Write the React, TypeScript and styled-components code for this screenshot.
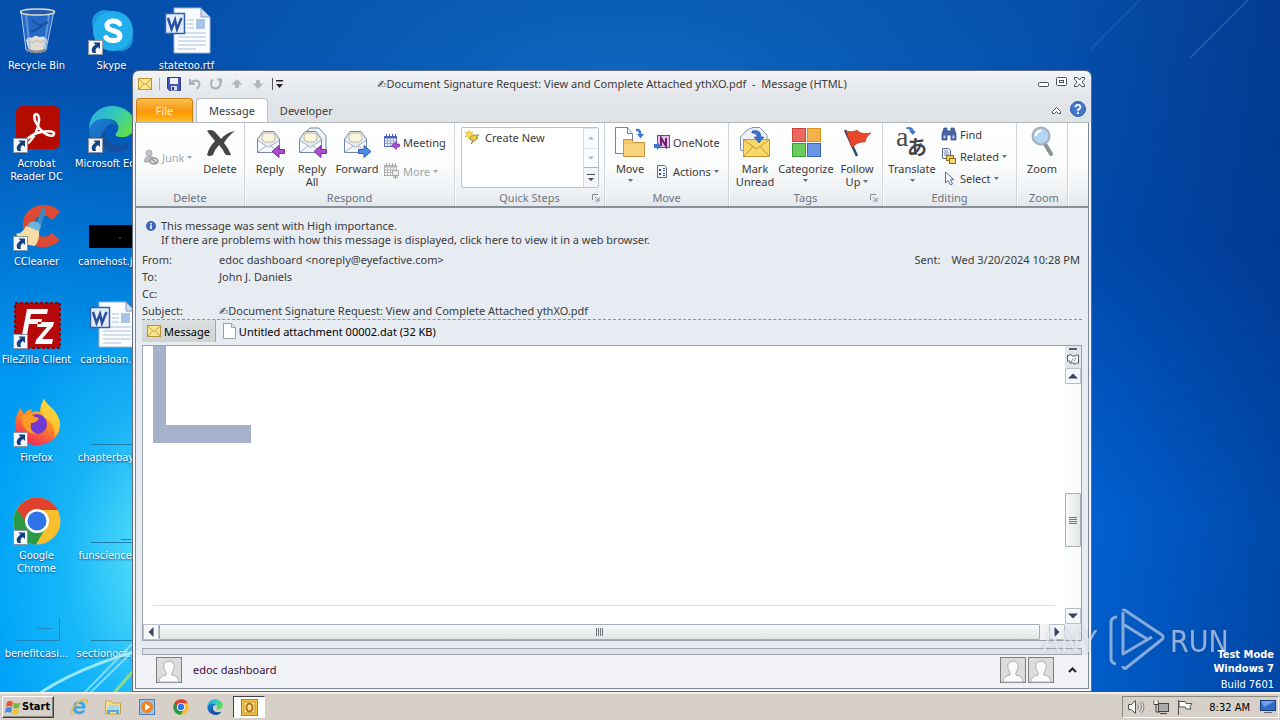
import React from "react";
import styled, { createGlobalStyle, css } from "styled-components";

const ui = '"Noto Sans", "DejaVu Sans", sans-serif';
const shell = '"DejaVu Sans Condensed", "DejaVu Sans", sans-serif';

const GlobalStyle = createGlobalStyle`
  * { box-sizing: border-box; }
  body { margin: 0; font: 11px/13px ${ui}; color: #3b3b3b; overflow: hidden; }
  button { font: inherit; color: inherit; background: none; border: 0; padding: 0; margin: 0; cursor: default; }
`;

/* ---------- desktop ---------- */

const Screen = styled.div`
  height: 100vh;
  display: grid;
  grid-template-rows: 1fr 28px;
`;

const Desktop = styled.main`
  position: relative;
  overflow: hidden;
  background:
    radial-gradient(ellipse 170px 280px at 160px 560px, rgba(110, 240, 250, 0.85), rgba(60, 210, 250, 0.4) 55%, transparent 100%),
    radial-gradient(ellipse 500px 540px at 60px 620px, #00a8fa 0%, rgba(0, 160, 246, 0.9) 45%, transparent 100%),
    radial-gradient(ellipse 460px 200px at 620px 90px, rgba(20, 120, 204, 0.6), transparent 100%),
    linear-gradient(to right, transparent 82%, rgba(0, 36, 110, 0.45) 100%),
    linear-gradient(to bottom, #0650ac 0%, #004cb0 35%, #0066da 75%, #0062d2 100%);
`;

const Wallpaper = styled.svg`
  position: absolute;
  left: 0;
  bottom: 0;
`;

const Streak = styled.svg`
  position: absolute;
  right: 0;
  top: 0;
`;

const IconGrid = styled.div`
  display: grid;
  grid-auto-flow: column;
  grid-template-rows: repeat(7, 98px);
  grid-auto-columns: 75px;
  width: max-content;
  padding-top: 7px;
  margin-left: -1px;
`;

const Shortcut = styled.button`
  display: flex;
  flex-direction: column;
  align-items: center;
  justify-content: flex-start;
  gap: 4px;
  color: #fff;
  font-family: ${shell};
  text-shadow: 0 1px 2px rgba(0, 30, 90, 0.8);
`;

const ShortcutLabel = styled.span<{ $wrap?: boolean }>`
  width: 75px;
  display: flex;
  justify-content: center;
  text-align: center;
  white-space: ${(p) => (p.$wrap ? "normal" : "nowrap")};
`;

const BuildInfo = styled.div`
  position: absolute;
  right: 6px;
  bottom: 0;
  display: flex;
  flex-direction: column;
  align-items: flex-end;
  color: #fff;
  font: bold 11px/14px ${shell};
`;
const BuildNumber = styled.span`
  margin-top: 2px;
  font-weight: normal;
`;

const Watermark = styled.svg`
  position: absolute;
  right: 44px;
  bottom: 18px;
  pointer-events: none;
  filter: drop-shadow(0 0 2px rgba(40, 60, 90, 0.35));
`;

/* ---------- window ---------- */

const Window = styled.section`
  position: absolute;
  left: 132px;
  right: 188px;
  top: 70px;
  bottom: 0;
  display: flex;
  flex-direction: column;
  padding: 0 2px 2px;
  border: 1px solid #5d6a7c;
  border-radius: 7px 7px 0 0;
  background: linear-gradient(to bottom, #f2f4f6 0, #e2e5e9 28px, #dfe3e6 51px, #f4f6f8 52px);
`;

const TitleBar = styled.header`
  height: 26px;
  display: flex;
  align-items: center;
  padding: 0 3px;
`;

const QuickAccess = styled.div`
  display: flex;
  align-items: center;
  gap: 7px;
  flex: 1 1 0;
`;
const Rule = styled.i<{ $dark?: boolean }>`
  width: 1px;
  height: 12px;
  background: ${(p) => (p.$dark ? "#555" : "#a8adb5")};
`;
const Title = styled.h1`
  margin: 0;
  font: 11px/14px ${ui};
  white-space: pre;
`;
const WindowButtons = styled.div`
  flex: 1 1 0;
  display: flex;
  justify-content: flex-end;
  align-items: center;
  gap: 5px;
  padding-bottom: 2px;
`;

const TabStrip = styled.nav`
  height: 25px;
  display: flex;
  align-items: flex-end;
  padding: 0 3px 0 1px;
`;
const Tab = styled.button<{ $kind?: "file" | "active" }>`
  height: 24px;
  padding: 0 12px;
  margin-left: ${(p) => (p.$kind === "active" ? "3px" : "0")};
  border-radius: 4px 4px 0 0;
  ${(p) =>
    p.$kind === "file" &&
    css`
      width: 57px;
      color: #fff6dc;
      border: 1px solid #c87d10;
      border-bottom: 0;
      background: linear-gradient(to bottom, #fbc04c, #f79a1a 45%, #ff9a00 60%, #ffc02c);
    `}
  ${(p) =>
    p.$kind === "active" &&
    css`
      background: #fff;
      border: 1px solid #bcc1c8;
      border-bottom: 0;
    `}
`;
const TabTools = styled.div`
  margin-left: auto;
  height: 25px;
  display: flex;
  align-items: center;
  gap: 9px;
`;

const Frame = styled.div`
  flex: 1;
  min-height: 0;
  display: flex;
  flex-direction: column;
  border: 1px solid #7c8797;
  border-top-color: #b4bac2;
  background: #e7ebf2;
`;

/* ---------- ribbon ---------- */

const Ribbon = styled.div`
  height: 85px;
  display: flex;
  border-bottom: 2px solid #8a9099;
  background: linear-gradient(to bottom, #fff 0%, #fbfcfc 50%, #eceff2 88%, #e3e6ea 100%);
`;
const Group = styled.section<{ $w: number }>`
  width: ${(p) => p.$w}px;
  display: grid;
  grid-template-rows: 1fr 15px;
  border-right: 1px solid #cfd4da;
  box-shadow: 1px 0 #fff;
`;
const GroupBody = styled.div<{ $pad?: number }>`
  display: flex;
  align-items: flex-start;
  padding-left: ${(p) => p.$pad ?? 4}px;
  padding-top: 3px;
`;
const GroupLabel = styled.div`
  display: grid;
  grid-template-columns: 12px 1fr 12px;
  align-items: start;
  text-align: center;
  color: #6c7482;
`;
const GroupName = styled.span`
  grid-column: 2;
`;
const Launcher = styled.button`
  grid-column: 3;
  height: 13px;
  display: flex;
  align-items: center;
`;
const Large = styled.button<{ $w: number }>`
  width: ${(p) => p.$w}px;
  display: flex;
  flex-direction: column;
  align-items: center;
  gap: 4px;
  white-space: nowrap;
`;
const LargeText = styled.span`
  display: flex;
  flex-direction: column;
  align-items: center;
`;
const WithArrow = styled.span`
  display: flex;
  align-items: center;
  gap: 3px;
`;
const ArrowRow = styled.span`
  height: 10px;
  display: flex;
  align-items: center;
`;
const Column = styled.div<{ $gap: number; $top: number }>`
  display: flex;
  flex-direction: column;
  gap: ${(p) => p.$gap}px;
  padding-top: ${(p) => p.$top}px;
  padding-left: 3px;
`;
const Small = styled.button<{ $off?: boolean }>`
  height: 16px;
  display: flex;
  align-items: center;
  gap: 3px;
  color: ${(p) => (p.$off ? "#a2a6ab" : "inherit")};
  white-space: nowrap;
`;
const JunkSlot = styled.div`
  width: 57px;
  padding-top: 23px;
`;
const Gallery = styled.div`
  width: 138px;
  height: 61px;
  display: grid;
  grid-template-columns: 1fr 15px;
  margin-top: 1px;
  border: 1px solid #bcc2ca;
  border-radius: 2px;
  background: #fff;
`;
const GalleryItem = styled.button`
  height: 18px;
  display: flex;
  align-items: center;
  gap: 4px;
  padding-left: 3px;
`;
const GalleryScroll = styled.div`
  display: grid;
  grid-template-rows: repeat(3, 1fr);
  border-left: 1px solid #d3d7dc;
`;
const GalleryButton = styled.button<{ $last?: boolean }>`
  display: flex;
  align-items: center;
  justify-content: center;
  background: ${(p) => (p.$last ? "#f3f5f7" : "#fafbfc")};
  border-top: 1px solid ${(p) => (p.$last ? "#aab1bb" : "#e4e7ea")};
`;

/* ---------- message header ---------- */

const Pane = styled.div`
  flex: 1;
  min-height: 0;
  display: flex;
  flex-direction: column;
  padding: 11px 6px 7px;
`;
const Info = styled.div`
  display: flex;
  gap: 5px;
  padding: 0 4px;
  line-height: 14px;
`;
const InfoIcon = styled.span`
  height: 14px;
  display: flex;
  align-items: center;
`;
const InfoText = styled.div`
  display: flex;
  flex-direction: column;
`;
const Fields = styled.dl`
  display: grid;
  grid-template-columns: 77px 1fr auto;
  grid-auto-rows: 17px;
  align-items: center;
  margin: 4px 0 0;
  padding-right: 2px;
  border-bottom: 1px dashed #8c929c;
`;
const Name = styled.dt`
  grid-column: 1;
`;
const Value = styled.dd`
  margin: 0;
`;
const Sent = styled.dd`
  margin: 0;
  display: flex;
  gap: 11px;
`;

const Attachments = styled.div`
  height: 25px;
  display: flex;
  align-items: flex-start;
  gap: 7px;
  color: #000;
`;
const AttachTab = styled.button<{ $on?: boolean }>`
  height: 22px;
  display: flex;
  align-items: center;
  gap: 3px;
  ${(p) =>
    p.$on &&
    css`
      padding: 0 5px;
      border-right: 1px solid #a0a6a6;
      background: linear-gradient(to bottom, #dcdfe0, #cfd4d1);
    `}
`;

/* ---------- reading area ---------- */

const Reader = styled.div`
  flex: 1;
  min-height: 0;
  display: grid;
  grid-template-columns: 1fr 16px;
  grid-template-rows: 1fr 16px;
  border: 1px solid #9aa1ac;
  background: #e9ecf0;
`;
const Page = styled.article`
  min-height: 0;
  display: flex;
  flex-direction: column;
  justify-content: space-between;
  padding: 0 10px 18px;
  background: #fff;
`;
const Corner = styled.div`
  width: 98px;
  height: 97px;
  border-left: 13px solid #a6b1cb;
  border-bottom: 18px solid #a6b1cb;
`;
const Divider = styled.hr`
  width: 100%;
  margin: 0;
  border: 0;
  border-top: 1px solid #dcdcdc;
`;
const VScroll = styled.div`
  min-height: 0;
  display: grid;
  grid-template-rows: 22px 16px 110fr 54px 61fr 16px;
  background: #fafbfb;
`;
const SplitBox = styled.div`
  display: flex;
  flex-direction: column;
  align-items: center;
  gap: 3px;
  padding-top: 2px;
  background: #e1e5ea;
`;
const Grip = styled.i`
  width: 8px;
  height: 2px;
  background: #555b68;
`;
const HScroll = styled.div`
  display: grid;
  grid-template-columns: 16px 1fr 9px 16px;
  background: #f2f3f4;
`;
const ScrollButton = styled.button`
  display: flex;
  align-items: center;
  justify-content: center;
  border: 1px solid #b9bfc7;
  border-radius: 1px;
  background: #f6f7f8;
`;
const Thumb = styled.div<{ $v?: boolean }>`
  display: flex;
  align-items: center;
  justify-content: center;
  border: 1px solid #a6acb4;
  border-radius: 1px;
  background: linear-gradient(${(p) => (p.$v ? "to right" : "to bottom")}, #f8f9f9, #e2e5e6);
`;
const Empty = styled.span``;

const Splitter = styled.div`
  height: 7px;
  margin: 0 6px;
  border: 1px solid #a0a7b1;
  background: #dfe3e9;
`;
const People = styled.footer`
  height: 33px;
  display: flex;
  align-items: flex-start;
  gap: 2px;
  padding: 2px 11px 0 20px;
  background: #f0f2f5;
`;
const PersonName = styled.span`
  flex: 1;
  padding-left: 9px;
  line-height: 26px;
  color: #3a0f3c;
`;
const Expand = styled.button`
  height: 26px;
  padding-left: 12px;
  display: flex;
  align-items: center;
`;

/* ---------- taskbar ---------- */

const Taskbar = styled.footer`
  display: flex;
  align-items: flex-start;
  padding: 2px 1px 0 2px;
  border-top: 2px solid #f4f1ec;
  background: #d6d0c8;
  color: #000;
  font-family: ${shell};
`;
const StartButton = styled.button`
  height: 22px;
  width: 52px;
  display: flex;
  align-items: center;
  gap: 1px;
  padding-left: 2px;
  font: bold 11px/14px ${shell};
  border: 1px solid;
  border-color: #fff #404040 #404040 #fff;
  box-shadow: inset -1px -1px #8c8780;
`;
const Pins = styled.div`
  flex: 1;
  display: flex;
  padding-left: 9px;
  gap: 2px;
`;
const Pin = styled.button<{ $on?: boolean }>`
  width: 32px;
  height: 22px;
  display: flex;
  align-items: center;
  justify-content: center;
  ${(p) =>
    p.$on &&
    css`
      background: #fff;
      border: 1px solid;
      border-color: #404040 #fff #fff #404040;
    `}
`;
const Tray = styled.div`
  height: 22px;
  display: flex;
  align-items: center;
  gap: 8px;
  padding: 0 2px 0 5px;
  border: 1px solid;
  border-color: #8c8780 #fff #fff #8c8780;
`;
const Clock = styled.time`
  padding: 0 2px 0 8px;
`;

/* ---------- drawings ---------- */

const Down = ({ c = "#6a6f78" }: { c?: string }) => (
  <svg width="5" height="3" viewBox="0 0 5 3"><path d="M0 0h5L2.500 3z" fill={c} /></svg>
);
const Tri = ({ d, c = "#3c4260" }: { d: string; c?: string }) => (
  <svg width="10" height="10" viewBox="0 0 10 10"><path d={d} fill={c} /></svg>
);

const LinkArrow = () => (
  <g transform="translate(0 33)">
    <rect x=".5" y=".5" width="14" height="14" fill="#f4f7fb" stroke="#8a94a4" />
    <path d="M5.500 2.500H12V9l-2-2c-2.500 1.500-3 3-2 6H5C2.500 10 4 6.500 7.500 4.700z" fill="#17417e" />
  </g>
);
const Art = ({ children, link }: { children: React.ReactNode; link?: boolean }) => (
  <svg width="48" height="48" viewBox="0 0 48 48">
    {children}
    {link && <LinkArrow />}
  </svg>
);

const RecycleBin = () => (
  <Art>
    <path d="M8 4l5 39q10 5 20 0l8-39z" fill="#2f72d0" fillOpacity=".75" stroke="#a9c8ee" />
    <path d="M13 33q2-4 6-2 3-4 7-1 6-2 8 3l-1.500 9q-9 4-17 0z" fill="#e2dcd4" />
    <path d="M16 34q4 3 8-1 4 4 7 0" stroke="#b8b4ae" fill="none" />
    <path d="M13 8l4 34M36 8l-5 34" stroke="#8cbcf0" strokeOpacity=".55" strokeWidth="2" />
    <path d="M19 13q8 9 16 2M17 25q9-2 16-10" stroke="#1b4fa4" strokeWidth="2" fill="none" />
    <ellipse cx="24.500" cy="5" rx="17" ry="3" fill="#245cb0" stroke="#dcd8cc" strokeWidth="1.500" />
    <path d="M14 43q9 4 19 0" stroke="#8b8a86" strokeWidth="2.500" fill="none" />
  </Art>
);
const Skype = () => (
  <Art link>
    <circle cx="17" cy="16" r="13" fill="#1b9ade" />
    <circle cx="33" cy="32" r="12" fill="#1a93dc" />
    <circle cx="25" cy="24" r="20" fill="#22aeea" />
    <path d="M31.500 17C29.500 13 19 12.500 19 18.500c0 6.500 13 4 13 10.500 0 6-11.500 5.500-14 1.500" stroke="#fff" strokeWidth="5" fill="none" strokeLinecap="round" />
  </Art>
);
const WordDoc = () => (
  <Art>
    <path d="M11 1h27l9 9v36H11z" fill="#fbfcfe" stroke="#9fb4d2" />
    <path d="M38 1v9h9z" fill="#cfdcf0" stroke="#7f9cc8" />
    <path d="M24 13h7M24 17h7M24 21h7M15 26h28M15 30h28M15 34h28M15 38h28M15 42h18" stroke="#a9bedd" />
    <rect x="33" y="12" width="9" height="10" fill="#a9c2e6" />
    <rect x="2.500" y="6.500" width="19" height="20" fill="#e4ecf8" stroke="#2f5fb0" strokeWidth="1.500" />
    <path d="M5 11l3.500 11 3.500-9 2 9 4.500-11" stroke="#2a50a4" strokeWidth="2.500" fill="none" />
  </Art>
);
const Acrobat = () => (
  <Art link>
    <rect x="3" y="1" width="44" height="43" rx="6" fill="#b30b00" />
    <path d="M23 9c-5 2 2 14 7 18s10 5 11 2c1-4-11-3-17-1-5 2-13 7-12 10 2 3 8-4 11-11s5-17 0-18z" fill="none" stroke="#fff" strokeWidth="2.500" />
  </Art>
);
const EdgeShape = () => (
  <>
    <defs>
      <linearGradient id="edgeA" x1="0" y1="0" x2="1" y2=".6"><stop offset="0" stopColor="#2aa6e4" /><stop offset=".5" stopColor="#31c8c0" /><stop offset="1" stopColor="#5ede4c" /></linearGradient>
      <linearGradient id="edgeB" x1="0" y1="0" x2="1" y2="1"><stop offset="0" stopColor="#1b83d8" /><stop offset="1" stopColor="#12499c" /></linearGradient>
    </defs>
    <path d="M1 25C1 10 11 1 24 1c14 0 24 10 23 20-1 8-8 12-15 11-5 0-5-3-3-5 4-5 0-13-9-13-9 0-17 5-19 11z" fill="url(#edgeA)" />
    <path d="M1 24C5 12 22 10 29 20c-9-4-14 4-11 12 3 9 14 12 25 6C35 52 10 49 4 36Q1 30 1 24z" fill="url(#edgeB)" />
    <path d="M18 24c-3 12 9 20 25 14-8 12-22 11-28 3-4-6-3-13 3-17z" fill="#164f9e" />
  </>
);
const CCleaner = () => (
  <Art link>
    <path d="M47 9C38-3 8-1 10 25c1 20 24 25 37 12l-8-7c-7 7-18 4-18-8 0-10 11-13 18-5z" fill="#dc4a32" />
    <path d="M29 5l4 1-5 18-5-2z" fill="#3c8ac4" />
    <path d="M16 20q8-4 12 3l-2 6-12-4z" fill="#6cb4dc" />
    <path d="M13 23l13 5q1 9-4 15Q8 42 3 31q7-1 10-8z" fill="#f4dca4" />
  </Art>
);
const FileZilla = () => (
  <Art link>
    <rect x="2" y="2" width="45" height="45" fill="#b5090c" stroke="#8c0406" strokeWidth="2" strokeDasharray="3 2" />
    <path d="M35 8H14L9 34h5l2-11h12l1-5H17l1-5h16zM25 21h16l-1 4-11 13h11l-1 5H22l1-4 11-13h-10z" fill="#fff" />
  </Art>
);
const Firefox = () => (
  <Art link>
    <defs><linearGradient id="fox" x1=".8" y1="0" x2=".3" y2="1"><stop offset="0" stopColor="#ffe83c" /><stop offset=".45" stopColor="#ff9422" /><stop offset="1" stopColor="#f0245c" /></linearGradient></defs>
    <path d="M31 0c3 7 14 11 16 24 1 12-8 22-23 22S2 36 2 25c0-8 4-12 5-16l4 6q3-4 8-5l-1 4q5-3 9-1 0-7 4-13z" fill="url(#fox)" />
    <circle cx="24" cy="25" r="10" fill="#7038d4" />
    <path d="M8 18q8-6 14 0l4 1q-2 5-8 5-2 8 6 11-14 0-16-17z" fill="#ff9a26" />
    <path d="M31 0c3 7 14 11 16 24q0 8-5 14 0-14-11-20-5-9 0-18z" fill="#ffd33c" fillOpacity=".75" />
  </Art>
);
const ChromeShape = () => (
  <>
    <circle cx="24" cy="24" r="23.500" fill="#f9bf2c" />
    <path d="M4 12A23.500 23.500 0 0 1 45 13H24L14 30z" fill="#e0402e" />
    <path d="M4 12l12 18q6 6 16 2L23 47.500A23.500 23.500 0 0 1 4 12z" fill="#2b9a46" />
    <circle cx="24" cy="24" r="12" fill="#fff" />
    <circle cx="24" cy="24" r="9.500" fill="#2f74e8" />
  </>
);
const BlackImage = () => (<Art><rect x="1" y="22" width="47" height="23" fill="#000" /><path d="M31 35h2" stroke="#666" /></Art>);
const FlatImage = () => (<Art><path d="M3 45.500h45" stroke="#1c7fae" /></Art>);
const FlatImage2 = () => (<Art><path d="M3 45.500h45M33 42.500h10" stroke="#1c7fae" /></Art>);
const CornerImage = () => (<Art><path d="M3 45.500h43.500V23M24 33.500h15" stroke="#1c86b8" fill="none" /></Art>);

const Mail = () => (
  <svg width="14" height="12" viewBox="0 0 14 12"><rect x=".5" y=".5" width="13" height="11" fill="#fbe58a" stroke="#b8943c" /><path d="M1 1.500l6 5 6-5M1 11l4.500-5M13 11L8.500 6" fill="none" stroke="#c9a143" /></svg>
);
const Save = () => (
  <svg width="14" height="14" viewBox="0 0 14 14"><path d="M.5.5h13v13H2.500l-2-2z" fill="#4a55b4" stroke="#303a8c" /><path d="M3 1h8v6H3z" fill="#eef2fb" /><path d="M4 9h6v4.500H4z" fill="#d6dcf0" /><path d="M5 10h2v3H5z" fill="#303a8c" /></svg>
);
const Undo = () => (
  <svg width="14" height="12" viewBox="0 0 14 12"><path d="M2 1v5h5M2.500 5.500Q6 1.500 10 3q3.500 3-1 8" fill="none" stroke="#adb0b5" strokeWidth="2" /></svg>
);
const Redo = () => (
  <svg width="14" height="12" viewBox="0 0 14 12"><path d="M8 1.500h4V5M11 2.500q2 6-3.500 8Q2 10.500 2 6q0-3 2-4.500" fill="none" stroke="#adb0b5" strokeWidth="2" /></svg>
);
const Step = ({ up }: { up?: boolean }) => (
  <svg width="14" height="12" viewBox="0 0 14 12"><path d={up ? "M7 1l5.500 5.500H9V10H5V6.500H1.500z" : "M7 11l5.500-5.500H9V2H5v3.500H1.500z"} fill="#b4b7bc" /></svg>
);
const Customize = () => (
  <svg width="7" height="8" viewBox="0 0 7 8"><path d="M0 0h7v1.500H0zM0 4h7L3.500 8z" fill="#222" /></svg>
);
const Help = () => (
  <svg width="16" height="16" viewBox="0 0 16 16"><circle cx="8" cy="8" r="7.500" fill="#4478c8" stroke="#2f5fae" /><path d="M5.500 6.200Q5.500 3.800 8 3.800t2.500 2.200Q10.500 7.500 8 8.800v1.400" fill="none" stroke="#fff" strokeWidth="1.700" /><rect x="7.100" y="11.200" width="1.800" height="1.800" fill="#fff" /></svg>
);
const JunkIcon = () => (
  <svg width="16" height="16" viewBox="0 0 16 16"><circle cx="6" cy="4" r="3" fill="#c4c7ca" stroke="#a9acb0" /><path d="M1.500 13q0-6 5-6t4 6z" fill="#b9bcc0" stroke="#a4a7ab" /><ellipse cx="11" cy="12" rx="4" ry="3" fill="#dcdedf" stroke="#96999d" strokeWidth="1.500" /><path d="M8.500 10l5 4" stroke="#96999d" strokeWidth="1.500" /></svg>
);
const DeleteIcon = () => (
  <svg width="32" height="32" viewBox="0 0 32 32"><path d="M3 5q3-2 7 0 4 4 7 8 6-7 14-8-7 5-11 12 5 6 7 12-4 1-6-1-2-5-6-9-4 4-6 10-4 2-6 0 2-8 8-14-5-6-8-10z" fill="#454545" /></svg>
);
const ReplyIcon = ({ all, fwd }: { all?: boolean; fwd?: boolean }) => (
  <svg width="32" height="32" viewBox="0 0 32 32">
    {all && <path d="M10 6l4-4h9l7 8v14h-5" fill="#f2f5f9" stroke="#7487a4" />}
    <path d="M3.500 13L9 5.500h11l5.500 7.500v13.500h-22z" fill="#e4eaf2" stroke="#7487a4" />
    <rect x="8" y="7" width="13" height="9" rx="4" fill="#fbf6e0" stroke="#c9bb94" />
    <path d="M4 14.500l10.500 7 10.500-7V26H4z" fill="#f6f8fb" />
    <path d="M4 14.500l10.500 7 10.500-7M4 26l8-6M25 26l-8-6" fill="none" stroke="#a3b1c4" />
    {fwd ? (
      <path d="M17.500 23.500H23v-4l7 6-7 6v-4h-5.500z" fill="#4c8be4" stroke="#2c5eb4" />
    ) : (
      <path d="M30.500 23.500H25v-4l-7 6 7 6v-4h5.500z" fill="#a94fcb" stroke="#7c2c9c" />
    )}
  </svg>
);
const MeetingIcon = ({ off }: { off?: boolean }) => (
  <svg width="16" height="16" viewBox="0 0 16 16"><rect x=".5" y="2.500" width="12" height="10" fill="#f5f7fb" stroke={off ? "#aaa" : "#5a6cb4"} /><path d="M1 2.500h12v2H1z" fill={off ? "#bbb" : "#4a5cc0"} /><path d="M1 7h12M1 9.500h12M3.500 4v8M6.500 4v8M9.500 4v8" stroke={off ? "#bbb" : "#9aa6d4"} /><path d="M2.500 0v3M5.500 0v3M8.500 0v3M11.500 0v3" stroke={off ? "#aaa" : "#4a5cc0"} />{off ? (<><rect x="8.500" y="7.500" width="6" height="5" fill="#eee" stroke="#aaa" /><path d="M11.500 12v4M9 14h5" stroke="#999" /></>) : (<path d="M15.500 10h-3V7.500l-5 4 5 4V13h3z" fill="#a94fcb" stroke="#7c2c9c" strokeWidth=".7" />)}</svg>
);
const QuickIcon = () => (
  <svg width="16" height="14" viewBox="0 0 16 14"><path d="M6 5h8l-3 3 2 0-7 6 2-4-3 0z" fill="#f0cf3a" stroke="#8c8248" strokeWidth=".8" /><path d="M4 0l1 2.500L8 2 6 4.500 8 7 5 6 4 9 3 6 0 7l2-2.500L0 2l3 .5z" fill="#fbe04c" stroke="#d6a520" strokeWidth=".5" /></svg>
);
const LaunchIcon = () => (
  <svg width="8" height="8" viewBox="0 0 8 8"><path d="M.5 6V.5H6M3 3l3.500 3.500M7 3.500V7H3.500" fill="none" stroke="#868d98" /></svg>
);
const MoveIcon = () => (
  <svg width="32" height="32" viewBox="0 0 32 32"><path d="M1.500 1.500h12l5 6v20h-17z" fill="#fff" stroke="#6c84ac" /><path d="M13.500 1.500v6h5" fill="#dbe5f3" stroke="#6c84ac" /><path d="M9.500 16V13.500h8l2 3h11v14h-21z" fill="#f6c667" stroke="#c8923a" /><path d="M10 18h20v12H10z" fill="#f9d37c" /><path d="M22 3q5-1 5.500 5H30l-3.500 4.500L23 8h2q0-3-3-3z" fill="#3a78d4" /></svg>
);
const OneNoteIcon = () => (
  <svg width="16" height="16" viewBox="0 0 16 16"><rect x="3.500" y="1.500" width="12" height="12" fill="#e4c4e4" stroke="#8c3a90" /><path d="M7 12V4l5 8V4" fill="none" stroke="#6f1f74" strokeWidth="2" /><path d="M0 10h3V8l4 4-4 4v-2H0z" fill="#3a78d4" /></svg>
);
const ActionsIcon = () => (
  <svg width="16" height="16" viewBox="0 0 16 16"><path d="M3.500 2.500h7l2 2v10h-9z" fill="#f2f5fa" stroke="#5a6c8c" /><path d="M5 6h2v2H5zM5 10h2v2H5zM9 5h2v1H9zM9 7h2v1H9zM9 10h2v1H9zM9 12h2v1H9z" fill="#3c4c70" /></svg>
);
const MarkIcon = () => (
  <svg width="32" height="32" viewBox="0 0 32 32"><path d="M1.500 11L8 4l6-2.500h7l7 8v15h-26.500z" fill="#eef2f7" stroke="#8394ac" /><rect x="4.500" y="13.500" width="26" height="17" fill="#f9d868" stroke="#c49a34" /><path d="M5 14l12.500 9L30 14M5 30l9-9.500M30 30l-9-9.500" fill="none" stroke="#c49a34" /><path d="M13 5q9-2 9 6h3l-5 6-5-6h3q0-4-5-4z" fill="#3a70d0" stroke="#2452a4" strokeWidth=".6" /></svg>
);
const CategorizeIcon = () => (
  <svg width="32" height="32" viewBox="0 0 32 32"><rect x="2.500" y="2.500" width="13" height="13" fill="#ea6a62" stroke="#d0403a" /><rect x="17.500" y="2.500" width="13" height="13" fill="#f6b24a" stroke="#d8921e" /><rect x="2.500" y="17.500" width="13" height="13" fill="#6acc5c" stroke="#3aa034" /><rect x="17.500" y="17.500" width="13" height="13" fill="#6a96e6" stroke="#3c66bc" /></svg>
);
const FlagIcon = () => (
  <svg width="32" height="32" viewBox="0 0 32 32"><path d="M4 4l12 26" stroke="#33466e" strokeWidth="2.500" /><path d="M5 5q7 2 11-1 3 5 14 3-5 3-6 9-8-1-13 6z" fill="#e8472c" stroke="#b8301c" strokeWidth=".7" /></svg>
);
const TranslateGlyphs = styled.svg`
  font-family: "Liberation Serif", serif;
`;
const TranslateIcon = () => (
  <TranslateGlyphs width="32" height="32" viewBox="0 0 32 32"><text x="0" y="20" fontSize="28" fill="#4a4a4a">a</text><text x="11" y="29" fontSize="20" fontFamily="Noto Sans CJK JP" fontWeight="bold" fill="#444">あ</text><path d="M9 2q7-3 9 3h2l-3 4-4-4h2q-2-2-6-3z" fill="#3a78d4" /></TranslateGlyphs>
);
const FindIcon = () => (
  <svg width="16" height="16" viewBox="0 0 16 16"><path d="M3 2h3v3h4V2h3l2 6v6h-5V9H6v5H1V8z" fill="#4a66a8" stroke="#2c4484" strokeWidth=".7" /><path d="M2.500 9.500h2v3h-2zM11.500 9.500h2v3h-2z" fill="#c4d2ee" /></svg>
);
const RelatedIcon = () => (
  <svg width="16" height="16" viewBox="0 0 16 16"><path d="M1.500.5h6l2 2v8h-8z" fill="#eef2f9" stroke="#54688c" /><path d="M3 3h4M3 5h5M3 7h5" stroke="#7c90b8" /><rect x="5.500" y="7.500" width="7" height="5" fill="#f4cc50" stroke="#8c6c1c" /><rect x="8.500" y="10.500" width="6" height="5" fill="#f9dc70" stroke="#8c6c1c" /></svg>
);
const SelectIcon = () => (
  <svg width="16" height="16" viewBox="0 0 16 16"><path d="M4.500 2v11l2.800-2.500L9.500 15l2-1-2-4.300h3.300z" fill="#fff" stroke="#5a6a98" /></svg>
);
const ZoomIcon = () => (
  <svg width="32" height="32" viewBox="0 0 32 32"><path d="M19 18l6 10" stroke="#8a8f96" strokeWidth="4" strokeLinecap="round" /><circle cx="15" cy="10" r="8.500" fill="#b4d6f2" stroke="#a4aebb" strokeWidth="2" /><path d="M9.500 10q1-5 6-5.500" stroke="#fff" strokeWidth="2" fill="none" /></svg>
);
const InfoGlyph = () => (
  <svg width="10" height="10" viewBox="0 0 10 10"><circle cx="5" cy="5" r="5" fill="#3f66b8" /><path d="M4.200 2h1.600v1.400H4.200zM4.200 4.200h1.600V8H4.200z" fill="#fff" /></svg>
);
const FileGlyph = () => (
  <svg width="13" height="16" viewBox="0 0 13 16"><path d="M.5.5h8l4 4v11H.5z" fill="#fff" stroke="#9a9fa8" /><path d="M8.500.5v4h4" fill="none" stroke="#9a9fa8" /></svg>
);
const RulerGlyph = () => (
  <svg width="12" height="13" viewBox="0 0 12 13"><path d="M.5 2.500h2l1-1.500 1.500 2h3l1-1h2.500v8h-2l-1.500 1.500-1-1.500h-4v-2h-2.500z" fill="#fff" stroke="#555b68" /><path d="M4 9.500l2-4M7 8.500l2-4" stroke="#8d929c" /></svg>
);
const Avatar = () => (
  <svg width="26" height="26" viewBox="0 0 26 26"><rect x=".5" y=".5" width="25" height="25" fill="#dcdcdc" stroke="#7d7d7d" /><path d="M3 25q0-6 7-7 1-2-1-4-4-9 4-10 8 1 4 10-2 2-1 4 7 1 7 7z" fill="#fbfbfb" stroke="#b0b0b0" /></svg>
);
const StartFlag = () => (
  <svg width="16" height="16" viewBox="0 0 16 16"><path d="M2 3q3-2 6 0L7 8Q4 6 1 8z" fill="#e2542c" /><path d="M9 3.500q3 2 6 0L14 8.500q-3 2-6 0z" fill="#6cb840" /><path d="M1 9q3-2 6 0l-1 5q-3-2-6 0z" fill="#3c8ce0" /><path d="M8 9.500q3 2 6 0l-1 5q-3 2-6 0z" fill="#f6c32c" /></svg>
);
const IeIcon = () => (
  <svg width="18" height="18" viewBox="0 0 18 18"><path d="M15.500 10.500H6q.5 3 3.500 3 2 0 3-1.200h2.700q-1.500 4-5.800 4-6.400 0-6.400-6.500T9.500 3.200Q16 3.200 15.500 10.500zM6 8.300h6.500q-.5-2.500-3.200-2.500T6 8.300z" fill="#3aa4e4" /><path d="M2.500 16.500Q-.5 13 6 6.500t11-4.500q1 1-1 4" fill="none" stroke="#e8bd3c" strokeWidth="1.500" /></svg>
);
const ExplorerIcon = () => (
  <svg width="18" height="18" viewBox="0 0 18 18"><path d="M1.500 5V3h6l1 2h8v11h-15z" fill="#f6dc88" stroke="#c8a448" /><path d="M4 7h11v7H4z" fill="#a8d8f4" /><path d="M3 16v-4h12v4h-3v-2H6v2z" fill="#58acdc" /></svg>
);
const PlayerIcon = () => (
  <svg width="18" height="18" viewBox="0 0 18 18"><rect x="1.500" y="1.500" width="15" height="15" fill="#9cc4e8" stroke="#4c80b8" /><circle cx="9" cy="9" r="6" fill="#f08420" /><path d="M7 5.500L12.500 9 7 12.500z" fill="#fff" /></svg>
);
const OutlookIcon = () => (
  <svg width="17" height="17" viewBox="0 0 17 17"><rect x=".5" y=".5" width="16" height="16" fill="#f4c440" stroke="#b87c14" /><rect x="3" y="3" width="11" height="11" fill="#fbe59c" stroke="#c8922c" /><ellipse cx="8.500" cy="8.500" rx="3" ry="4" fill="none" stroke="#b07410" strokeWidth="2" /></svg>
);

const WatermarkMark = () => (
  <Watermark width="196" height="66" viewBox="0 0 196 66" fill="none">
    <g fill="#eef4fc" fillOpacity=".6" fontFamily="DejaVu Sans Condensed, sans-serif" fontSize="30">
      <text x="2" y="44">ANY</text>
      <text x="130" y="44">RUN</text>
    </g>
    <g stroke="#c8daf2" strokeOpacity=".65" strokeWidth="3" strokeLinejoin="round">
      <path d="M77 9q-6 0-6 6v36q0 4 5 5" />
      <path d="M83 3q0-2 3 0l36 24q3 3-2 6L86 60q-3 1-3-2M83 4v42l29-17M83 16l24 15" />
    </g>
  </Watermark>
);

/* ---------- page ---------- */

type Item = { art: React.ReactNode; label: string; wrap?: boolean };
const items: Item[] = [
  { art: <RecycleBin />, label: "Recycle Bin" },
  { art: <Acrobat />, label: "Acrobat Reader DC", wrap: true },
  { art: <CCleaner />, label: "CCleaner" },
  { art: <FileZilla />, label: "FileZilla Client" },
  { art: <Firefox />, label: "Firefox" },
  { art: <Art link><ChromeShape /></Art>, label: "Google Chrome", wrap: true },
  { art: <CornerImage />, label: "benefitcasi..." },
  { art: <Skype />, label: "Skype" },
  { art: <Art link><EdgeShape /></Art>, label: "Microsoft Edge" },
  { art: <BlackImage />, label: "camehost.jpg" },
  { art: <WordDoc />, label: "cardsloan.rtf" },
  { art: <FlatImage />, label: "chapterbay...." },
  { art: <FlatImage2 />, label: "funscience...." },
  { art: <FlatImage />, label: "sectionoct.p..." },
  { art: <WordDoc />, label: "statetoo.rtf" },
];

const subject = "✍Document Signature Request: View and Complete Attached ythXO.pdf";

export default function App() {
  return (
    <Screen>
      <GlobalStyle />
      <Desktop>
        <Wallpaper width="180" height="120" viewBox="0 0 180 120" fill="none">
          <path d="M40 121Q90 88 180 68" stroke="#b8f4fc" strokeOpacity=".8" strokeWidth="3" />
          <path d="M84 121L134 70M90 121L134 78" stroke="#a8ecfa" strokeOpacity=".7" strokeWidth="2" />
          <path d="M114 121L134 98" stroke="#a8e46c" strokeOpacity=".8" strokeWidth="3" />
        </Wallpaper>
        <Streak width="200" height="120" viewBox="0 0 200 120" fill="none">
          <path d="M110 58L168 0" stroke="#7ab4f0" strokeOpacity=".22" strokeWidth="2" />
          <path d="M10 50L60 0" stroke="#7ab4f0" strokeOpacity=".1" strokeWidth="3" />
        </Streak>
        <IconGrid>
          {items.map((it) => (
            <Shortcut key={it.label}>
              {it.art}
              <ShortcutLabel $wrap={it.wrap}>{it.label}</ShortcutLabel>
            </Shortcut>
          ))}
        </IconGrid>

        <Window>
          <TitleBar>
            <QuickAccess>
              <Mail />
              <Rule />
              <Save />
              <Undo />
              <Redo />
              <Step up />
              <Step />
              <WithArrow><Rule $dark /><Customize /></WithArrow>
            </QuickAccess>
            <Title>{subject}{"  -  Message (HTML)"}</Title>
            <WindowButtons>
              <button aria-label="Minimize"><svg width="13" height="12" viewBox="0 0 13 12"><rect x="1.500" y="6.500" width="10" height="4" rx="1" fill="#fff" stroke="#4a4f5a" /></svg></button>
              <button aria-label="Maximize"><svg width="13" height="12" viewBox="0 0 13 12"><rect x="1.500" y="1.500" width="10" height="8" rx="1" fill="#fff" stroke="#4a4f5a" /><rect x="4.500" y="4.500" width="4" height="2" stroke="#4a4f5a" fill="none" /></svg></button>
              <button aria-label="Close"><svg width="13" height="12" viewBox="0 0 13 12"><path d="M1.500 1.500h3l2 2.500 2-2.500h3v1.500L9 6l2.500 3v1.500h-3l-2-2.500-2 2.500h-3V9L4 6 1.500 3z" fill="#fff" stroke="#4a4f5a" /></svg></button>
            </WindowButtons>
          </TitleBar>
          <TabStrip>
            <Tab $kind="file">File</Tab>
            <Tab $kind="active">Message</Tab>
            <Tab>Developer</Tab>
            <TabTools>
              <button aria-label="Collapse ribbon"><svg width="9" height="7" viewBox="0 0 9 7"><path d="M.5 4.500l4-4 4 4v2h-2l-2-2-2 2h-2z" fill="#fff" stroke="#4a4f5a" /></svg></button>
              <button aria-label="Help"><Help /></button>
            </TabTools>
          </TabStrip>

          <Frame>
            <Ribbon>
              <Group $w={109}>
                <GroupBody $pad={7}>
                  <JunkSlot><Small $off><JunkIcon />Junk<Down c="#a2a6ab" /></Small></JunkSlot>
                  <Large $w={40}><DeleteIcon />Delete</Large>
                </GroupBody>
                <GroupLabel><GroupName>Delete</GroupName></GroupLabel>
              </Group>
              <Group $w={210}>
                <GroupBody>
                  <Large $w={42}><ReplyIcon />Reply</Large>
                  <Large $w={42}><ReplyIcon all /><LargeText><span>Reply</span><span>All</span></LargeText></Large>
                  <Large $w={48}><ReplyIcon fwd />Forward</Large>
                  <Column $gap={13} $top={8}>
                    <Small><MeetingIcon />Meeting</Small>
                    <Small $off><MeetingIcon off />More<Down c="#a2a6ab" /></Small>
                  </Column>
                </GroupBody>
                <GroupLabel><GroupName>Respond</GroupName></GroupLabel>
              </Group>
              <Group $w={150}>
                <GroupBody $pad={6}>
                  <Gallery>
                    <GalleryItem><QuickIcon />Create New</GalleryItem>
                    <GalleryScroll>
                      <GalleryButton aria-label="Previous"><Tri d="M2 6.500h6L5 3.500z" c="#b4b8be" /></GalleryButton>
                      <GalleryButton aria-label="Next"><Tri d="M2 3.500h6L5 6.500z" c="#b4b8be" /></GalleryButton>
                      <GalleryButton aria-label="More steps" $last><Tri d="M1 1h8v1H1zM2 5h6L5 8z" c="#4a4f58" /></GalleryButton>
                    </GalleryScroll>
                  </Gallery>
                </GroupBody>
                <GroupLabel>
                  <GroupName>Quick Steps</GroupName>
                  <Launcher aria-label="Manage quick steps"><LaunchIcon /></Launcher>
                </GroupLabel>
              </Group>
              <Group $w={124}>
                <GroupBody>
                  <Large $w={42}><MoveIcon /><LargeText>Move<ArrowRow><Down /></ArrowRow></LargeText></Large>
                  <Column $gap={13} $top={8}>
                    <Small><OneNoteIcon />OneNote</Small>
                    <Small><ActionsIcon />Actions<Down /></Small>
                  </Column>
                </GroupBody>
                <GroupLabel><GroupName>Move</GroupName></GroupLabel>
              </Group>
              <Group $w={154}>
                <GroupBody $pad={3}>
                  <Large $w={46}><MarkIcon /><LargeText><span>Mark</span><span>Unread</span></LargeText></Large>
                  <Large $w={56}><CategorizeIcon /><LargeText>Categorize<ArrowRow><Down /></ArrowRow></LargeText></Large>
                  <Large $w={46}><FlagIcon /><LargeText><span>Follow</span><WithArrow>Up<Down /></WithArrow></LargeText></Large>
                </GroupBody>
                <GroupLabel>
                  <GroupName>Tags</GroupName>
                  <Launcher aria-label="Tag options"><LaunchIcon /></Launcher>
                </GroupLabel>
              </Group>
              <Group $w={134}>
                <GroupBody $pad={3}>
                  <Large $w={52}><TranslateIcon /><LargeText>Translate<ArrowRow><Down /></ArrowRow></LargeText></Large>
                  <Column $gap={6} $top={0}>
                    <Small><FindIcon />Find</Small>
                    <Small><RelatedIcon />Related<Down /></Small>
                    <Small><SelectIcon />Select<Down /></Small>
                  </Column>
                </GroupBody>
                <GroupLabel><GroupName>Editing</GroupName></GroupLabel>
              </Group>
              <Group $w={51}>
                <GroupBody>
                  <Large $w={42}><ZoomIcon />Zoom</Large>
                </GroupBody>
                <GroupLabel><GroupName>Zoom</GroupName></GroupLabel>
              </Group>
            </Ribbon>

            <Pane>
              <Info>
                <InfoIcon><InfoGlyph /></InfoIcon>
                <InfoText>
                  <span>This message was sent with High importance.</span>
                  <span>If there are problems with how this message is displayed, click here to view it in a web browser.</span>
                </InfoText>
              </Info>
              <Fields>
                <Name>From:</Name>
                <Value>edoc dashboard &lt;noreply@eyefactive.com&gt;</Value>
                <Sent><span>Sent:</span><span>Wed 3/20/2024 10:28 PM</span></Sent>
                <Name>To:</Name>
                <Value>John J. Daniels</Value>
                <Name>Cc:</Name>
                <Name>Subject:</Name>
                <Value>{subject}</Value>
              </Fields>
              <Attachments>
                <AttachTab $on><Mail />Message</AttachTab>
                <AttachTab><FileGlyph />Untitled attachment 00002.dat (32 KB)</AttachTab>
              </Attachments>
              <Reader>
                <Page><Corner /><Divider /></Page>
                <VScroll>
                  <SplitBox><Grip /><RulerGlyph /></SplitBox>
                  <ScrollButton aria-label="Scroll up"><Tri d="M0 7.500h10L5 2.500z" /></ScrollButton>
                  <Empty />
                  <Thumb $v><svg width="8" height="7" viewBox="0 0 8 7"><path d="M0 .5h8M0 2.500h8M0 4.500h8M0 6.500h8" stroke="#6c727c" /></svg></Thumb>
                  <Empty />
                  <ScrollButton aria-label="Scroll down"><Tri d="M0 2.500h10L5 7.500z" /></ScrollButton>
                </VScroll>
                <HScroll>
                  <ScrollButton aria-label="Scroll left"><Tri d="M7.500 0v10L2.500 5z" /></ScrollButton>
                  <Thumb><svg width="7" height="8" viewBox="0 0 7 8"><path d="M.5 0v8M2.500 0v8M4.500 0v8M6.500 0v8" stroke="#6c727c" /></svg></Thumb>
                  <Empty />
                  <ScrollButton aria-label="Scroll right"><Tri d="M2.500 0v10L7.500 5z" /></ScrollButton>
                </HScroll>
              </Reader>
            </Pane>
            <Splitter />
            <People>
              <Avatar />
              <PersonName>edoc dashboard</PersonName>
              <Avatar />
              <Avatar />
              <Expand aria-label="Expand people pane"><svg width="9" height="6" viewBox="0 0 9 6"><path d="M1 5l3.500-3.500L8 5" fill="none" stroke="#222" strokeWidth="2" /></svg></Expand>
            </People>
          </Frame>
        </Window>

        <WatermarkMark />
        <BuildInfo>
          <span>Test Mode</span>
          <span>Windows 7</span>
          <BuildNumber>Build 7601</BuildNumber>
        </BuildInfo>
      </Desktop>

      <Taskbar>
        <StartButton><StartFlag />Start</StartButton>
        <Pins>
          <Pin aria-label="Internet Explorer"><IeIcon /></Pin>
          <Pin aria-label="Explorer"><ExplorerIcon /></Pin>
          <Pin aria-label="Media Player"><PlayerIcon /></Pin>
          <Pin aria-label="Chrome"><svg width="16" height="16" viewBox="0 0 48 48"><ChromeShape /></svg></Pin>
          <Pin aria-label="Edge"><svg width="16" height="16" viewBox="0 0 48 48"><EdgeShape /></svg></Pin>
          <Pin aria-label="Outlook" $on><OutlookIcon /></Pin>
        </Pins>
        <Tray>
          <svg width="17" height="14" viewBox="0 0 17 14"><path d="M.5 4.500h3l4-4v13l-4-4h-3z" fill="#fff" stroke="#555" /><path d="M9.500 4.500q2 2.500 0 5M11.500 2.500q4 4.500 0 9M13.500 1q5 6 0 12" fill="none" stroke="#888" /></svg>
          <svg width="16" height="15" viewBox="0 0 16 15"><rect x="5.500" y="3.500" width="10" height="8" fill="#aaa" stroke="#444" /><path d="M1 .5v4h4v-4M3 4.500V12h4M7 13.500h7" fill="none" stroke="#444" /><path d="M1.500 1h3v3h-3z" fill="#fff" /></svg>
          <svg width="16" height="15" viewBox="0 0 16 15"><path d="M1.500 0v15" stroke="#555" /><path d="M2 1.500h6l1 2h6l-2 3 1 2.500H9L8 7H2z" fill="#fff" stroke="#555" /></svg>
          <Clock>8:32 AM</Clock>
          <svg width="16" height="14" viewBox="0 0 16 14"><rect x=".5" y=".5" width="15" height="10" fill="#2f6cc8" stroke="#1c3c78" /><path d="M1 1h14L4 7z" fill="#6ca4ec" /><path d="M4 12.500h8" stroke="#667" /></svg>
        </Tray>
      </Taskbar>
    </Screen>
  );
}
